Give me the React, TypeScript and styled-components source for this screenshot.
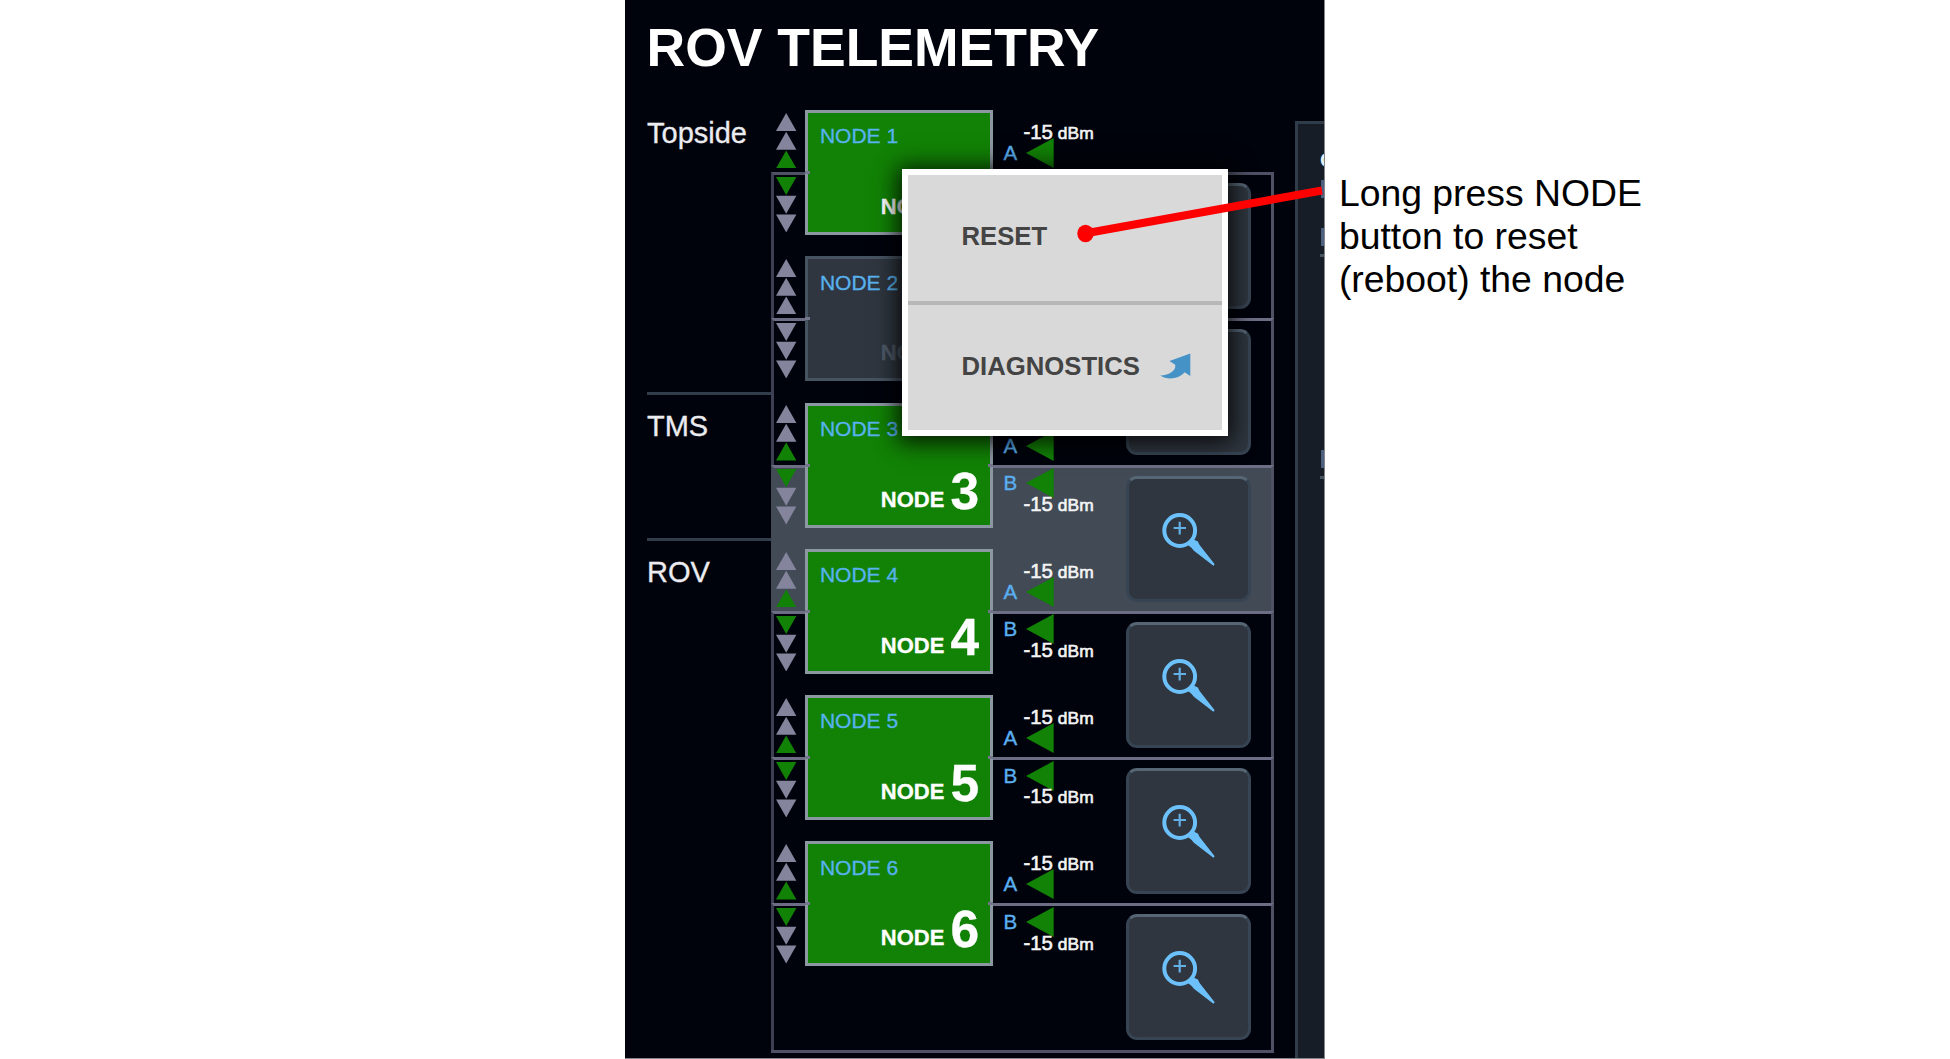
import React from "react";
import styled, { createGlobalStyle } from "styled-components";

const GlobalStyle = createGlobalStyle`
  body {
    margin: 0;
    background: #fff;
    font-family: "Liberation Sans", Arial, Helvetica, sans-serif;
  }
`;

const PITCH = 146.3;

const Page = styled.div`
  position: relative;
  display: flex;
  width: 1950px;
  height: 1059px;
  overflow: hidden;
  padding-left: 625px;
  box-sizing: border-box;
`;

const Panel = styled.main`
  position: relative;
  flex: none;
  box-sizing: border-box;
  width: 700px;
  height: 1059px;
  overflow: hidden;
  background: #01030c;
  border-right: 1px solid #85868b;
  border-bottom: 1px solid #85868b;
`;

const Header = styled.header`
  height: 110px;
  box-sizing: border-box;
  padding: 18px 0 0 21.5px;
`;

const Title = styled.h1`
  margin: 0;
  font-size: 53.5px;
  line-height: 60px;
  font-weight: 700;
  color: #fff;
  white-space: nowrap;
`;

const Body = styled.div`
  display: flex;
  align-items: flex-start;
`;

const Locations = styled.div`
  width: 146px;
  padding-left: 22px;
  box-sizing: border-box;
`;

const Location = styled.section<{ $first?: boolean }>`
  box-sizing: border-box;
  height: ${(p) => (p.$first ? 282 : PITCH)}px;
  padding-top: ${(p) => (p.$first ? 5 : 13)}px;
  border-top: ${(p) => (p.$first ? "none" : "3px solid #323d4b")};
  font-size: 29px;
  line-height: 36px;
  color: #ececf0;
  -webkit-text-stroke: 0.3px #ececf0;
`;

const Board = styled.div`
  display: grid;
  width: 503px;
`;

const Segments = styled.div`
  grid-area: 1 / 1;
  margin-top: 62px;
  border-bottom: 3px solid #4f5266;
`;

const Segment = styled.div<{ $active?: boolean; $first?: boolean }>`
  box-sizing: border-box;
  height: ${PITCH}px;
  display: flex;
  justify-content: flex-end;
  padding: 8px 20.5px 0 0;
  border: 3px solid ${(p) => (p.$active ? "#414a55" : "#3d4052")};
  border-right-color: #4f5165;
  border-top-color: ${(p) => (p.$first ? "#4f5165" : "#6d6e85")};
  border-bottom: 0;
  background: ${(p) => (p.$active ? "#414a55" : "transparent")};
`;

const ZoomButton = styled.button`
  box-sizing: border-box;
  width: 125px;
  height: 126px;
  padding: 0;
  border: 3px solid #374453;
  border-top-color: #566675;
  border-radius: 11px;
  background: #2f363f;
  display: block;
`;

const Nodes = styled.div`
  grid-area: 1 / 1;
  pointer-events: none;
`;

const NodeRow = styled.div`
  height: ${PITCH}px;
  display: flex;
  align-items: flex-start;
  padding-left: 5.3px;
`;

const ArrowColumn = styled.div`
  display: flex;
  flex-direction: column;
  gap: 8.6px;
  width: 20.4px;
  padding-top: 2.7px;
  margin-right: 8.7px;
`;

const ArrowGroup = styled.svg`
  display: block;
`;

const NodeButton = styled.div<{ $off?: boolean }>`
  position: relative;
  box-sizing: border-box;
  width: 188px;
  height: 125px;
  display: flex;
  flex-direction: column;
  justify-content: space-between;
  padding: 10.3px 11.3px 0 11.5px;
  border: 3.5px solid ${(p) => (p.$off ? "#465361" : "#8b97a1")};
  background: ${(p) => (p.$off ? "#2f363f" : "#118205")};
  color: ${(p) => (p.$off ? "#4d5a68" : "#fff")};

  &::before,
  &::after {
    content: "";
    position: absolute;
    top: 58px;
    width: 5px;
    height: 3px;
    background: #74778c;
  }
  &::before {
    left: -3px;
  }
  &::after {
    right: -3px;
  }
`;

const NodeTag = styled.span`
  font-size: 21px;
  line-height: 26px;
  color: #58b2ee;
  white-space: pre;
  -webkit-text-stroke: 0.3px #58b2ee;
`;

const NodeName = styled.div`
  display: flex;
  justify-content: flex-end;
  align-items: baseline;
  gap: 6px;
  font-weight: 700;
  font-size: 22px;
  line-height: 50px;
  -webkit-text-stroke: 0.3px currentColor;
`;

const NodeNumber = styled.span`
  font-size: 51.5px;
  line-height: 50px;
  position: relative;
  top: 2px;
`;

const Readings = styled.div`
  padding: 10px 0 0 10px;
  display: flex;
  flex-direction: column;
  gap: 7.4px;
`;

const Channel = styled.div<{ $below?: boolean }>`
  display: flex;
  flex-direction: ${(p) => (p.$below ? "column-reverse" : "column")};
`;

const Power = styled.div<{ $below?: boolean }>`
  position: relative;
  z-index: 1;
  display: flex;
  align-items: baseline;
  gap: 5px;
  height: 24px;
  line-height: 24px;
  margin: ${(p) => (p.$below ? "-6.3px 0 0 20px" : "0 0 -6px 20px")};
  font-size: 20.4px;
  color: #f4f4f4;
  -webkit-text-stroke: 0.6px #f4f4f4;
`;

const Unit = styled.span`
  font-size: 17.4px;
`;

const ChannelLine = styled.div`
  display: flex;
  align-items: center;
  height: 30px;
`;

const ChannelName = styled.span`
  width: 23px;
  font-size: 20.5px;
  line-height: 24px;
  color: #5aaff0;
  -webkit-text-stroke: 0.4px #5aaff0;
`;

const Aside = styled.aside`
  box-sizing: border-box;
  flex: 1;
  margin: 11px 0 0 21px;
  height: 950px;
  overflow: hidden;
  border-left: 3px solid #303c4a;
  border-top: 3px solid #303c4a;
  background: #171d26;
  padding: 23.5px 0 0 22px;
`;

const AsideTitle = styled.div`
  height: 25.5px;
  width: 20px;
  font-size: 21px;
  line-height: 24px;
  font-weight: 700;
  color: #e6eef6;
`;

const AsideMark = styled.div<{ $gap: number }>`
  width: 20px;
  height: 18px;
  margin: ${(p) => p.$gap}px 0 0 1px;
  background: #4c6080;
`;

const AsideRule = styled.div`
  width: 20px;
  height: 3px;
  margin: 8px 0 0 0;
  background: #465361;
`;

const Menu = styled.div`
  position: absolute;
  z-index: 2;
  left: 277px;
  top: 169px;
  box-sizing: border-box;
  width: 326px;
  height: 267px;
  border: 6px solid #fff;
  background: #d9d9d9;
  box-shadow: 0 2px 22px 4px rgba(0, 0, 0, 0.85);
  display: flex;
  flex-direction: column;
`;

const MenuItem = styled.div<{ $lift?: boolean }>`
  box-sizing: border-box;
  height: 125.5px;
  padding: 0 31px ${(p) => (p.$lift ? 3 : 2)}px 53.5px;
  display: flex;
  align-items: center;
  justify-content: space-between;
  font-size: 25.7px;
  line-height: 30px;
  font-weight: 700;
  color: #444;
`;

const MenuDivider = styled.div`
  flex: none;
  height: 4px;
  background: #b7b7b7;
`;

const Note = styled.p`
  margin: 172px 0 0 13.9px;
  width: 340px;
  font-size: 37.33px;
  line-height: 43px;
  color: #000;
`;

const Callout = styled.svg`
  position: absolute;
  z-index: 3;
  left: 1070px;
  top: 170px;
`;

function Arrows({ down, lit }: { down?: boolean; lit: boolean }) {
  const green = down ? 0 : 2;
  return (
    <ArrowGroup width="20.4" height="55.4" viewBox="0 0 20.4 55.4">
      {[0, 1, 2].map((i) => {
        const y = i * 18.7;
        const pts = down
          ? `0,${y} 20.4,${y} 10.2,${y + 18}`
          : `0,${y + 18} 20.4,${y + 18} 10.2,${y}`;
        return <polygon key={i} points={pts} fill={lit && i === green ? "#118205" : "#84859c"} />;
      })}
    </ArrowGroup>
  );
}

function Magnifier() {
  return (
    <svg width="119" height="120" viewBox="3 3 119 120" fill="none">
      <circle cx="53.7" cy="54.5" r="15.4" stroke="#6cc1fb" strokeWidth="4" />
      <path d="M47.6 52h12.4M53.7 45.8v12.6" stroke="#62b0e6" strokeWidth="2.2" />
      <path d="M61.9 69L66.9 63.2L71.9 65.5L73.6 69L88.7 88.3L87.4 89.8L67.9 74.8L65.4 71.8Z" fill="#6cc1fb" />
    </svg>
  );
}

function DiagnosticsArrow() {
  return (
    <svg width="31" height="27" viewBox="0 0 31 27">
      <path
        d="M30.3 0.5L9.5 8L15.2 11.7C16.5 17 9.5 22.4 0.3 22.4C6.5 27 18.5 26.6 24.6 19.2L30.3 23Z"
        fill="#4592c7"
      />
    </svg>
  );
}

function Reading({ name, below }: { name: string; below?: boolean }) {
  return (
    <Channel $below={below}>
      <Power $below={below}>
        <span>-15</span>
        <Unit>dBm</Unit>
      </Power>
      <ChannelLine>
        <ChannelName>{name}</ChannelName>
        <svg width="28" height="30" viewBox="0 0 28 30">
          <polygon points="0,15 27.7,0 27.7,30" fill="#118205" />
        </svg>
      </ChannelLine>
    </Channel>
  );
}

const nodes = [1, 2, 3, 4, 5, 6].map((id) => ({ id, online: id !== 2 }));

export default function App() {
  return (
    <Page>
      <GlobalStyle />
      <Panel>
        <Header>
          <Title>ROV TELEMETRY</Title>
        </Header>
        <Body>
          <Locations>
            <Location $first>Topside</Location>
            <Location>TMS</Location>
            <Location>ROV</Location>
          </Locations>
          <Board>
            <Segments>
              {nodes.map((n, i) => (
                <Segment key={n.id} $first={i === 0} $active={i === 2}>
                  <ZoomButton>
                    <Magnifier />
                  </ZoomButton>
                </Segment>
              ))}
            </Segments>
            <Nodes>
              {nodes.map((n) => (
                <NodeRow key={n.id}>
                  <ArrowColumn>
                    <Arrows lit={n.online} />
                    <Arrows lit={n.online} down />
                  </ArrowColumn>
                  <NodeButton $off={!n.online}>
                    <NodeTag>NODE {n.id}</NodeTag>
                    <NodeName>
                      NODE <NodeNumber>{n.id}</NodeNumber>
                    </NodeName>
                  </NodeButton>
                  {n.online && (
                    <Readings>
                      <Reading name="A" />
                      <Reading name="B" below />
                    </Readings>
                  )}
                </NodeRow>
              ))}
            </Nodes>
          </Board>
          <Aside>
            <AsideTitle>C</AsideTitle>
            <AsideMark $gap={7} />
            <AsideMark $gap={30} />
            <AsideRule />
            <AsideMark $gap={193} />
            <AsideRule />
          </Aside>
        </Body>
        <Menu>
          <MenuItem $lift>RESET</MenuItem>
          <MenuDivider />
          <MenuItem>
            DIAGNOSTICS
            <DiagnosticsArrow />
          </MenuItem>
        </Menu>
      </Panel>
      <Note>
        Long press NODE
        <br />
        button to reset
        <br />
        (reboot) the node
      </Note>
      <Callout width="260" height="80" viewBox="1070 170 260 80">
        <path d="M1086 233.3L1322 190.5" stroke="#f00" strokeWidth="8" />
        <ellipse cx="1085.5" cy="233.5" rx="8.2" ry="8.8" fill="#f00" />
      </Callout>
    </Page>
  );
}
